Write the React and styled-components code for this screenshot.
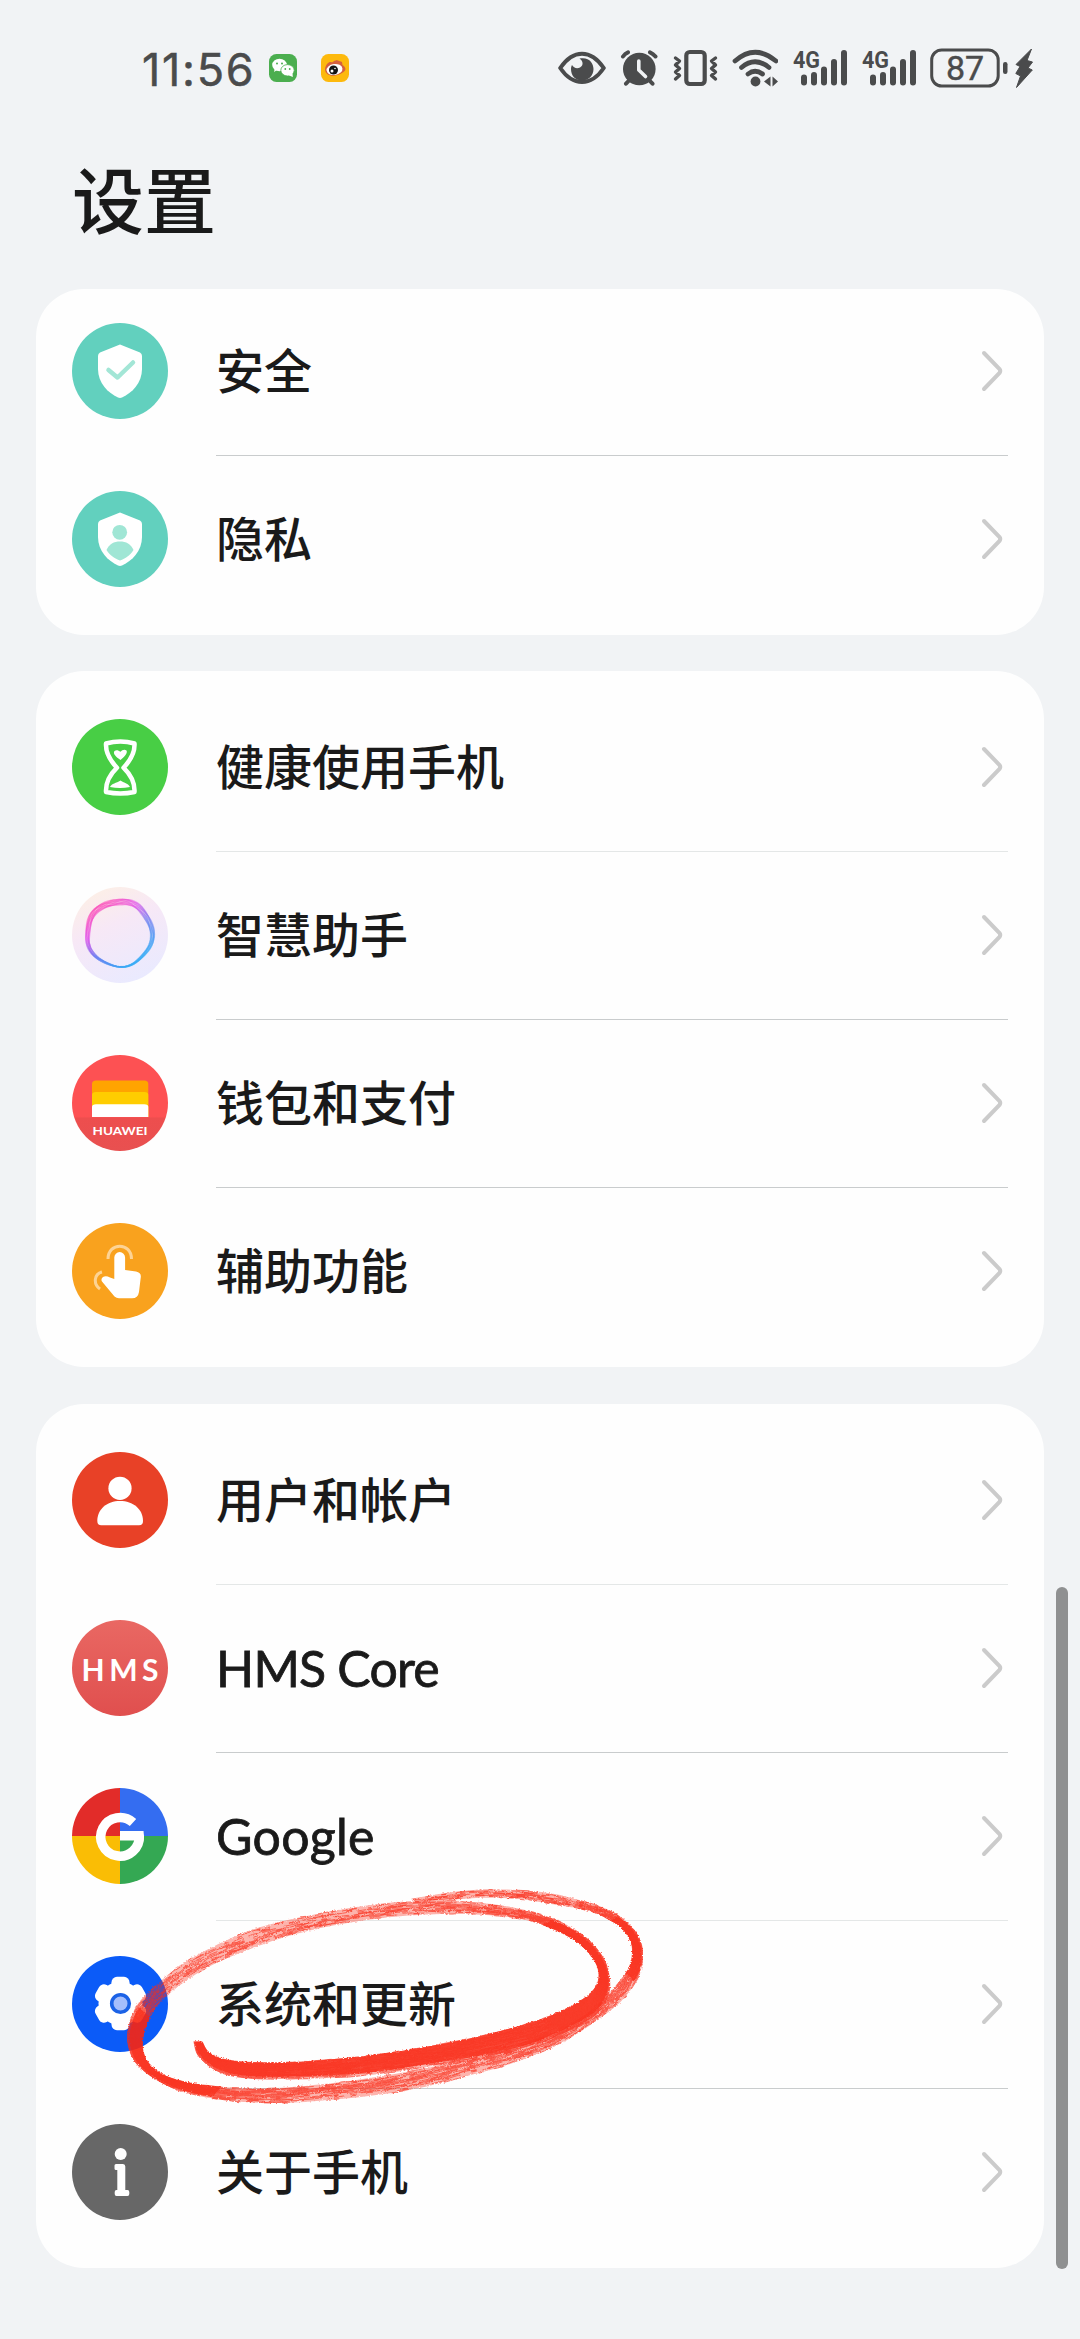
import styled, { createGlobalStyle } from 'styled-components';

const GlobalStyle = createGlobalStyle`
  * {
    box-sizing: border-box;
  }
  body {
    margin: 0;
    background: #f1f3f5;
    color: #1a1a1a;
    font-family: Lato, "Noto Sans CJK SC", sans-serif;
  }
`;

const Screen = styled.div`
  position: relative;
  width: 1080px;
  height: 2339px;
  overflow: hidden;
  background: #f1f3f5;
`;

const StatusBar = styled.header`
  display: flex;
  align-items: center;
  height: 136px;
  padding: 0 47px 0 142px;
  color: #4a4b4c;

  svg {
    display: block;
    flex-shrink: 0;
  }
`;

const Clock = styled.span`
  width: 127px;
  font-family: Inter, sans-serif;
  font-size: 45px;
  font-weight: 400;
  line-height: 50px;
  letter-spacing: 1.7px;
  padding-top: 3px;
  white-space: nowrap;
  -webkit-text-stroke: 0.5px currentColor;
`;

const AppBadges = styled.div`
  display: flex;
  gap: 24px;
`;

const StatusIcons = styled.div`
  display: flex;
  align-items: center;
  gap: 14px;
  margin-left: auto;
`;

const Power = styled.div`
  display: flex;
  gap: 7px;
`;

const Title = styled.h1`
  height: 153px;
  margin: 0;
  padding: 8px 0 0 72px;
  font-family: "Noto Sans CJK SC", sans-serif;
  font-size: 72px;
  font-weight: 500;
  line-height: 106px;
`;

const CardList = styled.main`
  display: flex;
  flex-direction: column;
  gap: 36.4px;
  padding: 0 36px;
`;

const Card = styled.ul`
  list-style: none;
  margin: 0;
  padding: ${props => props.$cut ? "0 0 12px" : "12px 0"};
  border-radius: 48px;
  background: #fefefe;
  overflow: hidden;

  & > li:first-child {
    margin-top: ${props => props.$cut ? "-2px" : "0"};
  }
`;

const Row = styled.li`
  display: flex;
  align-items: center;
  height: 168px;
  padding: 0 36px;
  cursor: pointer;
`;

const IconBlock = styled.div`
  width: 96px;
  height: 96px;
  margin-right: 48px;
  border-radius: 50%;
  background: ${props => props.$bg};
  overflow: hidden;

  svg {
    display: block;
  }
`;

const RowBody = styled.div`
  display: flex;
  flex: 1;
  align-items: center;
  justify-content: space-between;
  height: 168px;
  padding-right: 4px;
  box-shadow: ${props => props.$line ? `0 1px 0 ${props.$line}` : "none"};
`;

const Label = styled.span`
  padding-bottom: ${props => props.$latin ? "0" : "6px"};
  font-family: ${props => props.$latin ? 'Lato' : '"Noto Sans CJK SC"'}, sans-serif;
  font-size: ${props => props.$latin ? "50px" : "48px"};
  font-weight: ${props => props.$latin ? 400 : 500};
  line-height: 70px;
  letter-spacing: ${props => props.$spacing || "0"};
  -webkit-text-stroke: ${props => props.$latin ? "0.8px #1a1a1a" : "0"};
`;

const ScrollThumb = styled.div`
  position: absolute;
  top: 1587px;
  right: 12px;
  width: 12px;
  height: 682px;
  border-radius: 6px;
  background: #8f9091;
`;

const InkMark = styled.svg`
  position: absolute;
  left: 110px;
  top: 1860px;
  pointer-events: none;
`;


function WechatBadge() {
  return (
    <svg width="28" height="28" viewBox="0 0 28 28">
      <rect width="28" height="28" rx="7.5" fill="#4bae4f" />
      <path d="M5 18l1-4h5z" fill="#fff" />
      <ellipse cx="10.500" cy="11" rx="7.300" ry="6.200" fill="#fff" />
      <ellipse cx="18.500" cy="16.300" rx="6.700" ry="5.700" fill="#fff" stroke="#4bae4f" strokeWidth=".8" />
      <path d="M19 21l4.500-2 .3 4z" fill="#fff" />
      <g fill="#4bae4f">
        <circle cx="8" cy="9.500" r="1" />
        <circle cx="13" cy="9.500" r="1" />
        <circle cx="16.300" cy="15" r=".9" />
        <circle cx="20.700" cy="15" r=".9" />
      </g>
    </svg>
  );
}

function WeiboBadge() {
  return (
    <svg width="28" height="28" viewBox="0 0 28 28">
      <rect width="28" height="28" rx="7.5" fill="#fdb90d" />
      <path d="M4 15C5 9 9 7 11 8.500C14 6 15 7 15.500 6L21 8L21.500 11C26 14 25 17 21 19C13 24 4 22 4 15Z" fill="#d6603e" />
      <ellipse cx="13.500" cy="15.500" rx="8" ry="5.500" fill="#fff" transform="rotate(-8 13.500 15.500)" />
      <circle cx="12.500" cy="16" r="4.500" fill="#151515" />
      <circle cx="11" cy="17" r="1.500" fill="#fff" />
      <circle cx="14" cy="14.500" r=".8" fill="#fff" />
    </svg>
  );
}

function EyeIcon() {
  return (
    <svg width="48" height="40" viewBox="0 0 48 40">
      <path d="M2.200 20C9 10 16 5.700 24 5.700S39 10 45.800 20C39 30 32 34 24 34S9 30 2.200 20Z" fill="none" stroke="currentColor" strokeWidth="4" strokeLinejoin="round" />
      <path d="M21.500 10.500C31 8.500 35.500 15 35.500 21C35.500 28 30 32.500 24 32.500C17 32.500 13 27.500 13 21C13 19 13.500 18 14 17C15.500 20 19 21 22 19.500C26 17.500 25 12.500 21.500 10.500Z" fill="currentColor" />
    </svg>
  );
}

function AlarmIcon() {
  return (
    <svg width="38" height="40" viewBox="0 0 38 40">
      <g stroke="currentColor" strokeWidth="4" strokeLinecap="round" fill="none">
        <path d="M3 8.500Q5 5.500 8 4.300M30 4.300Q33 5.500 35.500 8.500M9.500 32L6 35.700M29 32L32.500 35.700" />
      </g>
      <circle cx="19.300" cy="21" r="16.300" fill="currentColor" />
      <path d="M18.800 13V22L25.500 28.500" fill="none" stroke="#f1f3f5" strokeWidth="3.600" strokeLinecap="round" strokeLinejoin="round" />
    </svg>
  );
}

function VibrateIcon() {
  return (
    <svg width="46" height="40" viewBox="0 0 46 40">
      <g fill="none" stroke="currentColor" strokeLinecap="round" strokeLinejoin="round">
        <rect x="14.300" y="4" width="18.400" height="32" rx="3.500" strokeWidth="4.200" />
        <path d="M3.500 10L7.500 13L3.500 17L7.500 20.500L3.500 24L7.500 27.500L3.500 31M43.500 10L39.500 13L43.500 17L39.500 20.500L43.500 24L39.500 27.500L43.500 31" strokeWidth="3.400" />
      </g>
    </svg>
  );
}

function WifiIcon() {
  return (
    <svg width="46" height="40" viewBox="0 0 46 40">
      <g fill="none" stroke="currentColor" strokeWidth="4.700" strokeLinecap="round">
        <path d="M3 13Q23 -4.500 44 13M9.500 19.500Q23 8 37 19.500M16 26Q23 20.500 30.500 26" />
      </g>
      <circle cx="23.500" cy="33.500" r="4.900" fill="currentColor" />
      <path d="M38.500 28.500V38.500L32 33.500ZM40.500 38.500V28.500L46 33.500Z" fill="currentColor" />
    </svg>
  );
}

function SignalIcon() {
  return (
    <svg width="55" height="40" viewBox="0 0 55 40">
      <text x="1" y="19.500" fontFamily="Roboto, sans-serif" fontSize="23" fontWeight="700" fill="currentColor" textLength="27" lengthAdjust="spacingAndGlyphs">4G</text>
      <g stroke="currentColor" strokeWidth="6" strokeLinecap="round">
        <path d="M12 29.500V34.500M22 27V34.500M32 21.500V34.500M42 14V34.500M52 5V34.500" />
      </g>
    </svg>
  );
}

function BatteryIcon() {
  return (
    <svg width="78" height="40" viewBox="0 0 78 40">
      <rect x="1.700" y="2" width="66.500" height="36" rx="10" fill="none" stroke="currentColor" strokeWidth="3" />
      <rect x="73" y="14" width="4.500" height="12" rx="2.200" fill="currentColor" />
      <text x="16" y="32" fontFamily="Roboto, sans-serif" fontSize="34" fill="currentColor" stroke="currentColor" strokeWidth="0.400" textLength="38">87</text>
    </svg>
  );
}

function BoltIcon() {
  return (
    <svg width="18" height="40" viewBox="0 0 18 40">
      <path d="M16.500 1L1 16.500L5 18.500L.8 25.500L5.500 28L1.500 39.500L17.300 22L13 20L17.500 14L12 12.500Z" fill="currentColor" stroke="currentColor" strokeWidth="1" strokeLinejoin="round" />
    </svg>
  );
}

function Chevron() {
  return (
    <svg width="23" height="42" viewBox="0 0 23 42">
      <path d="M3 3L18.500 19Q20 21 18.500 23L3 39" fill="none" stroke="#cbcbcb" strokeWidth="4" strokeLinecap="round" />
    </svg>
  );
}


const SHIELD = "M48 21.500L68 29.500Q70 30.500 70 33V46C70 60 60 70 50 74.500Q48 75.300 46 74.500C36 70 26 60 26 46V33Q26 30.500 28 29.500Z";

// wobbly closed curve for the assistant ring
const ringPath = (phase, amp, tilt) => {
  let d = "";
  for (let i = 0; i <= 72; i++) {
    const a = (i / 72) * Math.PI * 2;
    const r = 32.500 + amp * Math.cos(a * 3 + phase) + 0.700 * Math.sin(a * 5 + 1) + 1.300 * Math.sin(a * 2 + tilt);
    d += `${i ? "L" : "M"}${(47.500 + r * Math.cos(a)).toFixed(2)} ${(47 + r * Math.sin(a)).toFixed(2)}`;
  }
  return d + "Z";
};

const RINGS = [0, 1, 2, 3, 4, 5, 6, 7, 8].map(i => ringPath(i * 0.700, 1 + (i % 3) * 0.350, i * 0.700));

const glyphs = {
  security: (
    <>
      <path d={SHIELD} fill="#fff" />
      <path d="M36.500 47L45.500 54.500L61 39.500" fill="none" stroke="#a3e6d6" strokeWidth="4.500" strokeLinecap="round" strokeLinejoin="round" />
    </>
  ),
  privacy: (
    <>
      <path d={SHIELD} fill="#fff" />
      <circle cx="47.700" cy="41.300" r="7.400" fill="#a0e6d5" />
      <path d="M34.500 59C37 53 42 50.500 48 50.500S59 53 61.500 59C58 64.500 53.500 67.500 48 69.500C42.500 67.500 38 64.500 34.500 59Z" fill="#a0e6d5" />
    </>
  ),
  health: (
    <>
      <path d="M34 24.500Q48.500 20.500 62.500 24.500C63 34 58 42 51.500 48.700C58 55 63 63 62.500 73Q48.500 76 34 73C33.500 63 38.500 55 45 48.700C38.500 42 33.500 34 34 24.500Z" fill="none" stroke="#fff" strokeWidth="4.500" strokeLinejoin="round" />
      <path d="M48.500 41C44 38 40.500 34.500 42.500 32C44.500 30.500 46.500 31.500 48.500 32.800C50 31.200 52.500 30 54.500 31.500C56 34 52.500 38 48.500 41Z" fill="#fff" />
      <path d="M38 68C40 64 44 64.500 48.500 61.500C53 64.500 56 64 58 68Q48 70 38 68Z" fill="#fff" />
    </>
  ),
  assistant: (
    <>
      <defs>
        <linearGradient id="ring" x1="0.200" y1="0.100" x2="0.750" y2="0.900">
          <stop offset="0" stopColor="#fa3cb4" />
          <stop offset="0.280" stopColor="#e04be8" />
          <stop offset="0.580" stopColor="#6878f0" />
          <stop offset="1" stopColor="#35aaf5" />
        </linearGradient>
      </defs>
      {RINGS.map((d, i) => (
        <path key={i} d={d} fill="none" stroke="url(#ring)" strokeWidth="1.400" opacity="0.450" />
      ))}
    </>
  ),
  wallet: (
    <>
      <path d="M20 62V29Q20 25.500 24 25.500H72.300Q76.300 25.500 76.300 29V62Z" fill="#ffa400" />
      <path d="M20 62V40Q20 37 24 37H72.300Q76.300 37 76.300 40V62Z" fill="#ffcd00" />
      <path d="M20 62V52Q20 49.200 24 49.200H72.300Q76.300 49.200 76.300 52V62Z" fill="#fff" />
      <text x="20.500" y="79.700" fontFamily="Lato, sans-serif" fontSize="12" fontWeight="700" fill="#fff" textLength="55" lengthAdjust="spacingAndGlyphs">HUAWEI</text>
    </>
  ),
  touch: (
    <>
      <path d="M42.300 56V34.500A5.400 5.400 0 0 1 53.100 34.500V47L64 48.500Q69.300 49.500 68.800 54L67 69Q66 75.300 60 75.300H47Q44.500 75.300 42.500 73.500L30 58.500Q28.500 56 31 54Q34 52.500 38 54.500Z" fill="#fff" />
      <path d="M36 36C36 19 59.500 19 59.500 36M30 49C22 51 21 61 28 66" fill="none" stroke="#fdd394" strokeWidth="3" />
    </>
  ),
  user: (
    <g fill="#fff">
      <circle cx="48" cy="36.300" r="11.600" />
      <path d="M25.300 69C25.300 57 35 49 48 49S71 57 71 69Q71 73.300 67 73.300H29.300Q25.300 73.300 25.300 69Z" />
    </g>
  ),
  hms: (
    <text x="9.500" y="60.500" fontFamily="Lato, sans-serif" fontSize="30" fontWeight="700" fill="#fff" textLength="77">HMS</text>
  ),
  google: (
    <>
      <path d="M0 0H48V48H0Z" fill="#e22c29" />
      <path d="M48 0H96V48H48Z" fill="#346df1" />
      <path d="M0 48H48V96H0Z" fill="#fabd05" />
      <path d="M48 48H96V96H48Z" fill="#34a853" />
      <path d="M61 34.500A19.300 19.300 0 1 0 67.300 47.500" fill="none" stroke="#fff" strokeWidth="9.500" />
      <path d="M48 43H71.500Q72.500 48 71.500 52.500H48Z" fill="#fff" />
    </>
  ),
  system: (
    <>
      <g fill="#fff">
        <circle cx="48.500" cy="47.500" r="22" />
        {[0, 60, 120].map(a => (
          <rect key={a} x="39.500" y="20.800" width="18" height="53.400" rx="5.500" transform={`rotate(${a} 48.500 47.500)`} />
        ))}
      </g>
      <circle cx="48.500" cy="47.500" r="8.800" fill="#a5befc" stroke="#1b62e6" strokeWidth="3.600" />
    </>
  ),
  about: (
    <g fill="#fff">
      <circle cx="48.700" cy="30" r="6" />
      <path d="M44 40H51Q53.300 40 53.300 42.500V66H55.500Q57.300 66 57.300 68V70Q57.300 72 55.500 72H44.500Q42.700 72 42.700 70V68Q42.700 66 44.500 66H45.300V46H44Q42.500 46 42.500 44.500V41.500Q42.500 40 44 40Z" />
    </g>
  ),
};

const LINE = "#c9cccd";
const FAINT = "#e4e7e7";

const groups = [
  {
    cut: true,
    items: [
      { icon: "security", label: "安全", bg: "#62d0be", line: LINE },
      { icon: "privacy", label: "隐私", bg: "#62d0be" },
    ],
  },
  {
    items: [
      { icon: "health", label: "健康使用手机", bg: "#48ce45", line: FAINT },
      { icon: "assistant", label: "智慧助手", bg: "linear-gradient(155deg, #fdf0e4 5%, #f7e8f6 40%, #e9eaff 90%)", line: LINE },
      { icon: "wallet", label: "钱包和支付", bg: "linear-gradient(#fd5153 64%, #ed4e4e 66%, #e85050)", line: LINE },
      { icon: "touch", label: "辅助功能", bg: "#f9a21e" },
    ],
  },
  {
    items: [
      { icon: "user", label: "用户和帐户", bg: "#e84127", line: FAINT },
      { icon: "hms", label: "HMS Core", latin: true, bg: "linear-gradient(#e96863, #e04f4e)", line: LINE, spacing: "-0.8px" },
      { icon: "google", label: "Google", latin: true, bg: "#fff", line: FAINT, spacing: "0.3px" },
      { icon: "system", label: "系统和更新", bg: "#0b5bf8", line: LINE },
      { icon: "about", label: "关于手机", bg: "#676767" },
    ],
  },
];

// brush stroke: [inner x, inner y, outer x, outer y, ink density]
const BRUSH = [
  [258, 545, 235, 545, 1], [275, 575, 246, 585, 1], [310, 595, 280, 620, 1], [365, 605, 330, 645, 1],
  [430, 608, 410, 656, .98], [520, 606, 520, 657, .95], [620, 598, 630, 653, .93], [750, 583, 770, 640, .9],
  [870, 563, 890, 620, .9], [1000, 537, 1030, 597, .92], [1150, 497, 1180, 560, .95], [1250, 460, 1290, 508, .98],
  [1330, 413, 1365, 458, 1], [1364, 372, 1396, 400, 1], [1367, 328, 1397, 345, 1], [1345, 285, 1380, 292, 1],
  [1300, 240, 1335, 235, .98], [1230, 202, 1265, 187, .92], [1150, 177, 1170, 152, .8], [1050, 165, 1060, 131, .72],
  [940, 162, 940, 121, .65], [820, 168, 815, 125, .62], [700, 183, 690, 141, .62], [600, 202, 585, 161, .6],
  [500, 228, 485, 183, .6], [400, 264, 380, 216, .6], [300, 308, 280, 265, .65], [220, 357, 200, 313, .65],
  [160, 408, 135, 370, .7], [115, 465, 80, 428, .88], [95, 520, 55, 490, 1], [92, 570, 50, 550, 1],
  [113, 615, 75, 612, 1], [165, 652, 140, 665, 1], [255, 674, 225, 702, .94], [370, 684, 350, 724, .85],
  [480, 683, 480, 729, .78], [600, 672, 610, 720, .75], [720, 655, 740, 706, .75], [850, 632, 870, 683, .75],
  [980, 600, 1000, 648, .75], [1100, 565, 1120, 612, .75], [1230, 520, 1250, 557, .75], [1330, 460, 1345, 495, .75],
  [1410, 385, 1430, 425, .8], [1452, 325, 1480, 350, .93], [1463, 275, 1491, 287, 1], [1455, 238, 1482, 235, 1],
  [1430, 202, 1450, 189, .95], [1385, 172, 1405, 154, .85], [1330, 150, 1340, 128, .72], [1240, 133, 1245, 102, .6],
  [1150, 118, 1150, 91, .6], [1050, 113, 1045, 88, .55], [950, 120, 940, 99, .45], [850, 129, 835, 118, .4],
];

const spline = (a, b, c, d, t) =>
  0.5 * (2 * b + (c - a) * t + (2 * a - 5 * b + 4 * c - d) * t * t + (3 * b - a - 3 * c + d) * t * t * t);

const ribbon = (pts, width) => {
  const inner = pts.map(p => `${p[0].toFixed(1)} ${p[1].toFixed(1)}`);
  const outer = pts.map(p => `${(p[0] + (p[2] - p[0]) * width).toFixed(1)} ${(p[1] + (p[3] - p[1]) * width).toFixed(1)}`);
  return `M${inner.join("L")}L${outer.reverse().join("L")}Z`;
};

function makeBrush() {
  const STEPS = 8;
  const pts = [];
  for (let i = 0; i < BRUSH.length - 1; i++) {
    const p = [BRUSH[Math.max(i - 1, 0)], BRUSH[i], BRUSH[i + 1], BRUSH[Math.min(i + 2, BRUSH.length - 1)]];
    for (let s = 0; s < STEPS; s++) {
      const v = [0, 1, 2, 3, 4].map(k => spline(p[0][k], p[1][k], p[2][k], p[3][k], s / STEPS));
      pts.push([v[0] / 2.8, v[1] / 3, v[2] / 2.8, v[3] / 3, v[4]]);
    }
  }

  let seed = 7;
  const rand = () => {
    seed = (seed * 16807) % 2147483647;
    return seed / 2147483647;
  };

  // thin bristles that lift off the paper now and then
  const BRISTLES = 26;
  let bristles = "";
  for (let b = 0; b < BRISTLES; b++) {
    const t = b / (BRISTLES - 1);
    const bias = rand() * 0.24 - 0.1;
    let down = false;
    pts.forEach(([ix, iy, ox, oy, ink]) => {
      const edge = t > 0.8 || (t < 0.1 && ink < 0.8) ? 0.25 : 0;
      const want = rand() < (ink >= 0.97 ? 1 : ink + bias - edge);
      const jitter = ink >= 0.97 ? 0 : (rand() - 0.5) * 0.03;
      const x = ix + (ox - ix) * (t + jitter);
      const y = iy + (oy - iy) * (t + jitter);
      if (want) bristles += `${down ? "L" : "M"}${x.toFixed(1)} ${y.toFixed(1)}`;
      down = want;
    });
  }

  // stretches where the brush is pressed hard
  let solid = "";
  let run = [];
  pts.forEach((p, i) => {
    if (p[4] >= 0.89) run.push(p);
    if ((p[4] < 0.89 || i === pts.length - 1) && run.length) {
      solid += ribbon(run, run.some(r => r[4] < 0.95) ? 0.86 : 1);
      run = [];
    }
  });

  return { bristles, solid, wash: ribbon(pts, 1) };
}

const brush = makeBrush();

function CircleMark() {
  return (
    <InkMark width="560" height="260" viewBox="0 0 560 260">
      <defs>
        <filter id="grain" x="0" y="0" width="1" height="1" colorInterpolationFilters="sRGB">
          <feTurbulence type="fractalNoise" baseFrequency="0.5 0.8" numOctaves="2" seed="4" result="n" />
          <feDisplacementMap in="SourceGraphic" in2="n" scale="3" xChannelSelector="R" yChannelSelector="G" />
        </filter>
      </defs>
      <g opacity="0.93" filter="url(#grain)">
        <path d={brush.wash} fill="#f92c18" opacity="0.38" />
        <path d={brush.bristles} fill="none" stroke="#f92c18" strokeWidth="0.7" />
        <path d={brush.solid} fill="#f92410" opacity="0.85" />
      </g>
    </InkMark>
  );
}


function SettingRow({ item }) {
  return (
    <Row>
      <IconBlock $bg={item.bg}>
        <svg width="96" height="96" viewBox="0 0 96 96">{glyphs[item.icon]}</svg>
      </IconBlock>
      <RowBody $line={item.line}>
        <Label $latin={item.latin} $spacing={item.spacing}>{item.label}</Label>
        <Chevron />
      </RowBody>
    </Row>
  );
}

function App() {
  return (
    <Screen>
      <GlobalStyle />
      <StatusBar>
        <Clock>11:56</Clock>
        <AppBadges>
          <WechatBadge />
          <WeiboBadge />
        </AppBadges>
        <StatusIcons>
          <EyeIcon />
          <AlarmIcon />
          <VibrateIcon />
          <WifiIcon />
          <SignalIcon />
          <SignalIcon />
          <Power>
            <BatteryIcon />
            <BoltIcon />
          </Power>
        </StatusIcons>
      </StatusBar>
      <Title>设置</Title>
      <CardList>
        {groups.map((group, i) => (
          <Card key={i} $cut={group.cut}>
            {group.items.map(item => <SettingRow key={item.icon} item={item} />)}
          </Card>
        ))}
      </CardList>
      <ScrollThumb />
      <CircleMark />
    </Screen>
  );
}

export default App;
